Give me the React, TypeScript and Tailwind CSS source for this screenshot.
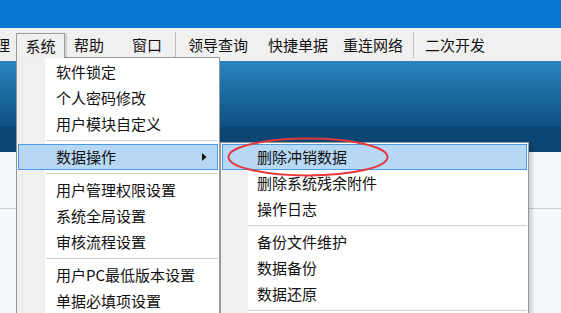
import React from "react";

const FONT = "font-['Noto_Sans_CJK_SC','Microsoft_YaHei',sans-serif]";

function Item({ label, hi, arrow }: { label: string; hi?: boolean; arrow?: boolean }) {
  return (
    <div
      className={
        "relative h-[26px] flex items-center leading-none mx-px " +
        (hi ? "bg-[#b7d8f4] border border-[#4a9be3]" : "border border-transparent")
      }
    >
      <span className="pl-[37px] text-[15px] text-[#111] -translate-y-[1.5px]">{label}</span>
      {arrow && (
        <svg className="absolute right-[10px] top-[8px]" width="5" height="8" viewBox="0 0 5 8">
          <polygon points="0,0 4.5,4 0,8" fill="#111" />
        </svg>
      )}
    </div>
  );
}

function SubItem({ label, hi }: { label: string; hi?: boolean }) {
  return (
    <div
      className={
        "relative h-[26px] flex items-center leading-none mx-px " +
        (hi ? "bg-[#b7d8f4] border border-[#4a9be3]" : "border border-transparent")
      }
    >
      <span className="pl-[34px] text-[15px] text-[#111] -translate-y-[1.5px]">{label}</span>
    </div>
  );
}

function Sep({ left }: { left: string }) {
  return (
    <div className={"h-[7px] flex items-center pr-px " + left}>
      <div className="h-px flex-1 bg-[#cfcfcf]" />
    </div>
  );
}

export default function App() {
  return (
    <div className={"relative w-[561px] h-[313px] overflow-hidden flex flex-col bg-[#f5f9fc] " + FONT}>
      {/* title strip */}
      <div className="h-[28px] bg-[#0a77d3]" />
      {/* menu bar */}
      <div className="h-[33px] bg-[#f0f0f0] flex items-start text-[15px] leading-none text-[#111]">
        <span className="ml-[-5px] mt-[9px]">理</span>
        <div className="relative z-30 ml-[6px] mt-[5px] w-[49px] h-[25px] bg-[#f0f0f0] border-t border-l border-r border-[#9c9c9c] flex items-start justify-center pt-[4px] shadow-[2px_0_1px_rgba(0,0,0,0.12)]">
          系统
        </div>
        <span className="ml-[9px] mt-[9px]">帮助</span>
        <span className="ml-[28px] mt-[9px]">窗口</span>
        <div className="ml-[13px] mt-[4px] w-px h-[26px] bg-[#bdbdbd]" />
        <span className="ml-[12px] mt-[9px]">领导查询</span>
        <span className="ml-[20px] mt-[9px]">快捷单据</span>
        <span className="ml-[15px] mt-[9px]">重连网络</span>
        <div className="ml-[10px] mt-[4px] w-px h-[26px] bg-[#bdbdbd]" />
        <span className="ml-[11px] mt-[9px]">二次开发</span>
      </div>
      {/* blue band */}
      <div className="h-[66px] bg-gradient-to-b from-[#2b86bf] to-[#0f4f81]" />
      <div className="h-[25px] bg-[#0a4573]" />
      {/* light area */}
      <div className="h-[57px] bg-[#f5f9fd] border-b border-[#c9c9c9]" />
      <div className="flex-1 bg-[#f6f9fc]" />

      {/* main dropdown */}
      <div className="absolute left-[16px] top-[57px] w-[204px] h-[270px] z-20 bg-white border border-[#979797] py-px">
        <div className="absolute left-0 top-0 bottom-0 w-[28px] bg-[#f0f0f0]" />
        <div className="relative">
          <Item label="软件锁定" />
          <Item label="个人密码修改" />
          <Item label="用户模块自定义" />
          <Sep left="pl-[29px]" />
          <Item label="数据操作" hi arrow />
          <Sep left="pl-[29px]" />
          <Item label="用户管理权限设置" />
          <Item label="系统全局设置" />
          <Item label="审核流程设置" />
          <Sep left="pl-[29px]" />
          <Item label="用户PC最低版本设置" />
          <Item label="单据必填项设置" />
        </div>
      </div>

      {/* submenu */}
      <div className="absolute left-[220px] top-[142px] w-[309px] h-[190px] z-20 bg-white border border-[#979797] py-px">
        <div className="absolute left-0 top-0 bottom-0 w-[27px] bg-[#f0f0f0]" />
        <div className="relative">
          <SubItem label="删除冲销数据" hi />
          <SubItem label="删除系统残余附件" />
          <SubItem label="操作日志" />
          <Sep left="pl-[27px]" />
          <SubItem label="备份文件维护" />
          <SubItem label="数据备份" />
          <SubItem label="数据还原" />
          <Sep left="pl-[27px]" />
        </div>
      </div>
      {/* submenu shadow */}
      <div className="absolute left-[529px] top-[146px] w-[6px] h-[180px] z-10 bg-gradient-to-r from-[rgba(0,0,0,0.18)] to-transparent" />

      {/* red annotation ellipse */}
      <svg className="absolute left-[226px] top-[136px] z-40" width="166" height="44" viewBox="0 0 166 44">
        <ellipse cx="82" cy="21" rx="79.5" ry="18.5" fill="none" stroke="#e6363c" strokeWidth="2" />
      </svg>
    </div>
  );
}
